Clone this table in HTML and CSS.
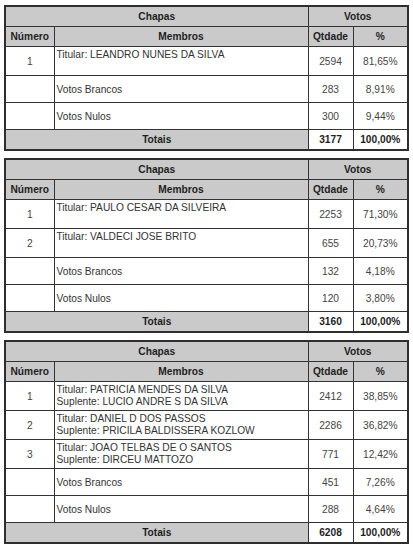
FILE: index.html
```html
<!DOCTYPE html>
<html lang="pt">
<head>
<meta charset="UTF-8">
<meta name="viewport" content="width=device-width, initial-scale=1.0">
<title>Apuração</title>
<link rel="stylesheet" href="styles.css">
</head>
<body>
    <table class="votes">
        <colgroup>
            <col class="col-num"><col class="col-members"><col class="col-qty"><col class="col-pct">
        </colgroup>
        <tr class="head">
            <th colspan="2">Chapas</th>
            <th colspan="2">Votos</th>
        </tr>
        <tr class="head">
            <th>Número</th>
            <th>Membros</th>
            <th>Qtdade</th>
            <th>%</th>
        </tr>
        <tr class="row">
            <td class="num">1</td>
            <td class="members">Titular: LEANDRO NUNES DA SILVA</td>
            <td class="val">2594</td>
            <td class="val">81,65%</td>
        </tr>
        <tr class="row">
            <td></td>
            <td class="label">Votos Brancos</td>
            <td class="val">283</td>
            <td class="val">8,91%</td>
        </tr>
        <tr class="row">
            <td></td>
            <td class="label">Votos Nulos</td>
            <td class="val">300</td>
            <td class="val">9,44%</td>
        </tr>
        <tr class="total">
            <th colspan="2">Totais</th>
            <td>3177</td>
            <td>100,00%</td>
        </tr>
    </table>

    <table class="votes">
        <colgroup>
            <col class="col-num"><col class="col-members"><col class="col-qty"><col class="col-pct">
        </colgroup>
        <tr class="head">
            <th colspan="2">Chapas</th>
            <th colspan="2">Votos</th>
        </tr>
        <tr class="head">
            <th>Número</th>
            <th>Membros</th>
            <th>Qtdade</th>
            <th>%</th>
        </tr>
        <tr class="row">
            <td class="num">1</td>
            <td class="members">Titular: PAULO CESAR DA SILVEIRA</td>
            <td class="val">2253</td>
            <td class="val">71,30%</td>
        </tr>
        <tr class="row">
            <td class="num">2</td>
            <td class="members">Titular: VALDECI JOSE BRITO</td>
            <td class="val">655</td>
            <td class="val">20,73%</td>
        </tr>
        <tr class="row">
            <td></td>
            <td class="label">Votos Brancos</td>
            <td class="val">132</td>
            <td class="val">4,18%</td>
        </tr>
        <tr class="row">
            <td></td>
            <td class="label">Votos Nulos</td>
            <td class="val">120</td>
            <td class="val">3,80%</td>
        </tr>
        <tr class="total">
            <th colspan="2">Totais</th>
            <td>3160</td>
            <td>100,00%</td>
        </tr>
    </table>

    <table class="votes">
        <colgroup>
            <col class="col-num"><col class="col-members"><col class="col-qty"><col class="col-pct">
        </colgroup>
        <tr class="head">
            <th colspan="2">Chapas</th>
            <th colspan="2">Votos</th>
        </tr>
        <tr class="head">
            <th>Número</th>
            <th>Membros</th>
            <th>Qtdade</th>
            <th>%</th>
        </tr>
        <tr class="row">
            <td class="num">1</td>
            <td class="members">Titular: PATRICIA MENDES DA SILVA<br>Suplente: LUCIO ANDRE S DA SILVA</td>
            <td class="val">2412</td>
            <td class="val">38,85%</td>
        </tr>
        <tr class="row">
            <td class="num">2</td>
            <td class="members">Titular: DANIEL D DOS PASSOS<br>Suplente: PRICILA BALDISSERA KOZLOW</td>
            <td class="val">2286</td>
            <td class="val">36,82%</td>
        </tr>
        <tr class="row">
            <td class="num">3</td>
            <td class="members">Titular: JOAO TELBAS DE O SANTOS<br>Suplente: DIRCEU MATTOZO</td>
            <td class="val">771</td>
            <td class="val">12,42%</td>
        </tr>
        <tr class="row">
            <td></td>
            <td class="label">Votos Brancos</td>
            <td class="val">451</td>
            <td class="val">7,26%</td>
        </tr>
        <tr class="row">
            <td></td>
            <td class="label">Votos Nulos</td>
            <td class="val">288</td>
            <td class="val">4,64%</td>
        </tr>
        <tr class="total">
            <th colspan="2">Totais</th>
            <td>6208</td>
            <td>100,00%</td>
        </tr>
    </table>
</body>
</html>
```

FILE: styles.css
```css
body {
    font-family: "Liberation Sans", Arial, sans-serif;
    font-size: 10.2px;
    color: #333;
    background: #fff;
    margin: 0;
    padding: 5px 0 0 4px;
}
.votes {
    width: 403px;
    table-layout: fixed;
    border-collapse: collapse;
    border: 2px solid #2e2e2e;
    margin-bottom: 7px;
}
.col-num { width: 49px; }
.col-members { width: 254px; }
.col-qty { width: 45px; }
.col-pct { width: 55px; }
.votes th,
.votes td {
    border: 1.5px solid #333;
    padding: 0;
    overflow: hidden;
    white-space: nowrap;
}
.votes th {
    background: #cacaca;
    color: #1e1e1e;
    font-weight: bold;
    text-align: center;
}
.head th {
    height: 19px;
}
.row td {
    height: 26px;
    vertical-align: middle;
}
.row .num,
.row .val {
    text-align: center;
    color: #444;
}
.row .members {
    vertical-align: top;
    padding: 2px 0 0 2px;
    line-height: 12px;
}
.row .label {
    padding-left: 2px;
}
.total th,
.total td {
    height: 19px;
}
.total td {
    font-weight: bold;
    text-align: center;
    color: #1e1e1e;
}
```
